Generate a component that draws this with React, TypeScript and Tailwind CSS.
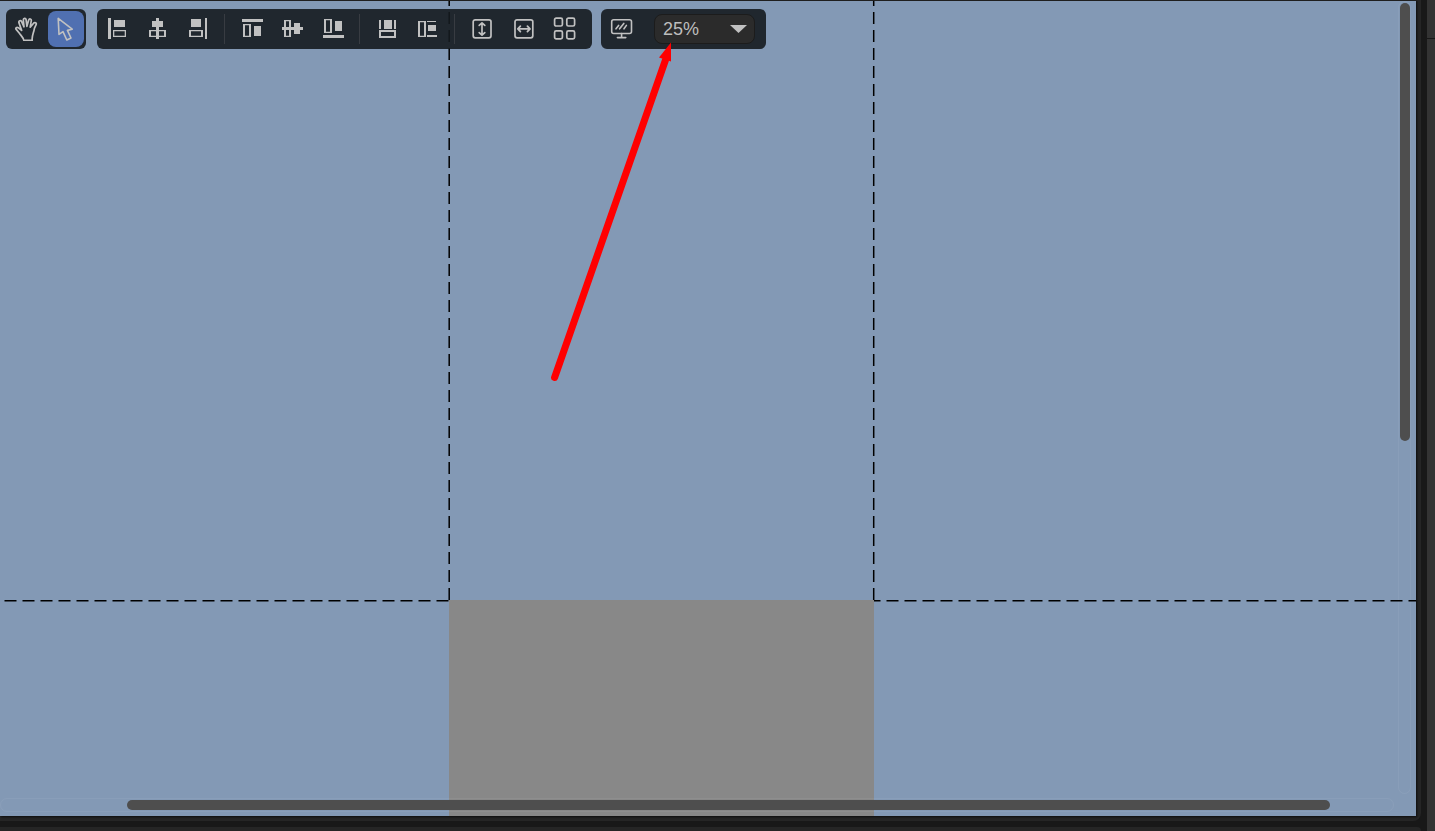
import { useState, type ReactNode } from "react";

function Icon({ children }: { children: ReactNode }) {
  return (
    <svg
      width="24"
      height="24"
      viewBox="0 0 24 24"
      fill="none"
      stroke="none"
      strokeLinejoin="round"
      strokeLinecap="round"
      aria-hidden="true"
      className="shrink-0"
    >
      {children}
    </svg>
  );
}

/** Solid block, pixel aligned. */
function Block({ x, y, w, h }: { x: number; y: number; w: number; h: number }) {
  return <rect x={x} y={y} width={w} height={h} fill="currentColor" shapeRendering="crispEdges" />;
}

/** Hollow block, given by its outer edges. */
function Frame({ x, y, w, h, t = 1.3 }: { x: number; y: number; w: number; h: number; t?: number }) {
  const s = 1.3;
  return (
    <path
      d={`M${x} ${y}h${w}v${h}h${-w}z M${x + t} ${y + s}v${h - 2 * s}h${w - 2 * t}v${-(h - 2 * s)}z`}
      fill="currentColor"
      fillRule="evenodd"
    />
  );
}

const icons = {
  hand: (
    <path
      d="M9.8 23.3C9.6 21 7.2 18.8 5.4 16.2L2.2 12.4C1.2 11 2.8 9.8 4.2 10.7L7.6 13.4L4.9 5.6C4.4 3.6 6.8 2.9 7.6 4.6L10 9.8L9.3 2.9C9.3.9 11.8.8 12.1 2.6L12.9 9.3L14.7 3C15.3 1.2 17.6 1.8 17.3 3.7L16.2 10.2L19.6 6.2C20.8 4.9 22.9 6 22.1 7.7L20.4 11.4C19.8 15.8 17.6 18.8 18.2 23.3Z"
      stroke="currentColor"
      strokeWidth="1.7"
    />
  ),
  cursor: (
    <path d="M4.2 1.4L5 17.4L9 14.6L12.8 23L17 21L13.4 13.4L18.2 12.2Z" stroke="currentColor" strokeWidth="1.6" />
  ),
  left: (
    <>
      <Block x={3} y={1} w={3} h={21} />
      <Block x={9} y={3} w={11} h={7} />
      <Frame x={8} y={13} w={13} h={7} />
    </>
  ),
  center: (
    <>
      <Block x={11} y={1} w={3} h={21} />
      <Block x={7} y={4} w={11} h={6} />
      <Frame x={4} y={13} w={17} h={7} t={2} />
    </>
  ),
  right: (
    <>
      <Block x={20} y={1} w={2} h={21} />
      <Block x={6} y={2} w={10} h={8} />
      <Frame x={4} y={13} w={14} h={7} t={2} />
    </>
  ),
  top: (
    <>
      <Block x={2} y={2} w={21} h={3} />
      <Frame x={3} y={7} w={8} h={13} t={2} />
      <Block x={14} y={9} w={7} h={10} />
    </>
  ),
  middle: (
    <>
      <Block x={2} y={10} w={21} h={3} />
      <Frame x={4} y={3} w={7} h={17} t={2} />
      <Block x={14} y={6} w={6} h={11} />
    </>
  ),
  bottom: (
    <>
      <Block x={3} y={18} w={21} h={3} />
      <Frame x={4} y={2} w={8} h={14} t={2} />
      <Block x={15} y={4} w={7} h={10} />
    </>
  ),
  spreadX: (
    <>
      <Block x={4} y={3} w={2} h={9} />
      <Block x={9} y={3} w={8} h={9} />
      <Block x={19} y={3} w={2} h={9} />
      <path d="M4 13h17v8H4z M6 15v4h13v-4z" fill="currentColor" fillRule="evenodd" />
    </>
  ),
  spreadY: (
    <>
      <Frame x={3} y={4} w={8} h={16} t={2} />
      <Block x={12} y={4} w={9} h={1} />
      <Block x={13} y={8} w={8} h={6} />
      <Block x={12} y={18} w={10} h={2} />
    </>
  ),
  height: (
    <g stroke="currentColor" strokeWidth="1.7">
      <rect x="3.2" y="2.8" width="17.8" height="18" rx="2" />
      <path d="M12 6v12M9.2 8.4L12 5.8l2.8 2.6M9.2 15.6l2.8 2.6l2.8-2.6" />
    </g>
  ),
  width: (
    <g stroke="currentColor" strokeWidth="1.7">
      <rect x="4" y="2.8" width="17.8" height="18" rx="2" />
      <path d="M7 11.9h12M9.4 9.1L6.8 11.9l2.6 2.8M16.4 9.1l2.6 2.8l-2.6 2.8" />
    </g>
  ),
  grid: (
    <g stroke="currentColor" strokeWidth="1.7">
      <rect x="2.6" y="1.2" width="7.8" height="7.8" rx="1.6" />
      <rect x="14.8" y="1.2" width="7.8" height="7.8" rx="1.6" />
      <rect x="2.6" y="13.8" width="7.8" height="8" rx="1.6" />
      <rect x="14.8" y="13.8" width="7.8" height="8" rx="1.6" />
    </g>
  ),
  screen: (
    <g stroke="currentColor" strokeWidth="1.6">
      <rect x="1.7" y="2.7" width="19.8" height="13.8" rx="2" />
      <path d="M6 11.8l2.6-3.4M9.6 11.8l4.2-5.4M14 11.8l2.4-3.4M11.6 16.5v4M7.4 20.6h8.4" />
    </g>
  ),
};

type IconName = keyof typeof icons;

function ToolButton({ icon, label, active }: { icon: IconName; label: string; active?: boolean }) {
  return (
    <button
      type="button"
      aria-label={label}
      aria-pressed={active}
      className={
        "flex size-9 shrink-0 items-center justify-center rounded-lg text-[#c1c1c1] " +
        (active ? "bg-[#5070b1]" : "hover:bg-white/10")
      }
    >
      <Icon>{icons[icon]}</Icon>
    </button>
  );
}

function Divider() {
  return <span className="mx-[9px] h-[30px] w-px shrink-0 bg-[#383c42]" />;
}

const panel = "flex h-10 items-center rounded-md bg-[#151b1f]/90";

function Toolbar() {
  const [zoom, setZoom] = useState("25%");
  return (
    <div role="toolbar" aria-label="Canvas tools" className="absolute top-2 left-1.5 flex">
      <div className={panel + " gap-1 px-0.5"}>
        <ToolButton icon="hand" label="Pan" />
        <ToolButton icon="cursor" label="Select" active />
      </div>
      <div className={panel + " ml-[11px] pr-2.5 pl-0.5"}>
        <div className="flex gap-1">
          <ToolButton icon="left" label="Align left" />
          <ToolButton icon="center" label="Align center" />
          <ToolButton icon="right" label="Align right" />
        </div>
        <Divider />
        <div className="flex gap-1">
          <ToolButton icon="top" label="Align top" />
          <ToolButton icon="middle" label="Align middle" />
          <ToolButton icon="bottom" label="Align bottom" />
        </div>
        <Divider />
        <div className="flex gap-1">
          <ToolButton icon="spreadX" label="Match width" />
          <ToolButton icon="spreadY" label="Match height" />
        </div>
        <Divider />
        <div className="flex gap-[5px]">
          <ToolButton icon="height" label="Fit height" />
          <ToolButton icon="width" label="Fit width" />
          <ToolButton icon="grid" label="Arrange in grid" />
        </div>
      </div>
      <div className={panel + " ml-[9px] gap-3.5 pr-[11px] pl-[3px]"}>
        <ToolButton icon="screen" label="Preview" />
        <div className="relative flex">
          <select
            aria-label="Zoom"
            value={zoom}
            onChange={(e) => setZoom(e.target.value)}
            className="h-[30px] w-[101px] appearance-none rounded-lg border border-[#1c1c1c] bg-[#2b2b2b] pl-2 text-lg text-[#bdbdbd]"
          >
            <option>25%</option>
            <option>50%</option>
            <option>100%</option>
            <option>200%</option>
          </select>
          <svg
            width="17"
            height="8"
            viewBox="0 0 17 8"
            aria-hidden="true"
            className="pointer-events-none absolute top-[11px] right-2 text-[#c1c1c1]"
          >
            <path d="M0 0H17L8.5 8Z" fill="currentColor" />
          </svg>
        </div>
      </div>
    </div>
  );
}

function Guides() {
  return (
    <svg className="absolute inset-0 size-full" aria-hidden="true">
      <g stroke="#000" strokeWidth="1.5" strokeDasharray="12 6">
        <path d="M449.2 599V-13" />
        <path d="M873.7 599V-13" />
        <path d="M4.5 599.7H448.5" />
        <path d="M874 599.7H4000" strokeDashoffset="5.5" />
      </g>
    </svg>
  );
}

function Pointer() {
  return (
    <svg
      width="130"
      height="345"
      viewBox="0 0 130 345"
      aria-hidden="true"
      className="pointer-events-none absolute top-[39px] left-[546px]"
    >
      <path d="M8.6 337.5L119.5 20" stroke="#f00" strokeWidth="7" strokeLinecap="round" />
      <path d="M125 2.5L113 17.5L125 21.5Z" fill="#f00" />
    </svg>
  );
}

export default function App() {
  return (
    <div className="flex h-screen overflow-hidden bg-[#181818] font-['Liberation_Sans',Arial,sans-serif]">
      <div className="flex min-w-0 flex-1 flex-col gap-1.5">
        <div className="flex min-h-0 flex-1 rounded-br-lg bg-[#252525] pr-[5px] pb-[5px]">
          <main className="relative min-w-0 flex-1 overflow-hidden border-t border-[#1f1f1f] bg-[#8399b5] shadow-[1px_1px_2px_#0c0c0c]">
            <div className="absolute top-[599px] bottom-0 left-[449px] w-[425px] bg-[#888888]" />
            <div className="absolute top-0 right-[5px] bottom-[22px] w-[13px] rounded-full border border-white/5">
              <div className="mt-px ml-px h-[438px] w-2.5 rounded-full bg-[#4e4e4e]" />
            </div>
            <div className="absolute right-[22px] bottom-1 left-0 h-3.5 rounded-full border border-white/5">
              <div className="mt-px mr-[63px] ml-[126px] h-2.5 rounded-full bg-[#4e4e4e]" />
            </div>
            <Guides />
            <Toolbar />
            <Pointer />
          </main>
        </div>
        <div className="h-1 rounded-tr-lg bg-[#252525]" />
      </div>
      <aside className="ml-1.5 w-2 bg-[#333333]">
        <div className="h-[39px] border-b border-[#181818]" />
      </aside>
    </div>
  );
}
